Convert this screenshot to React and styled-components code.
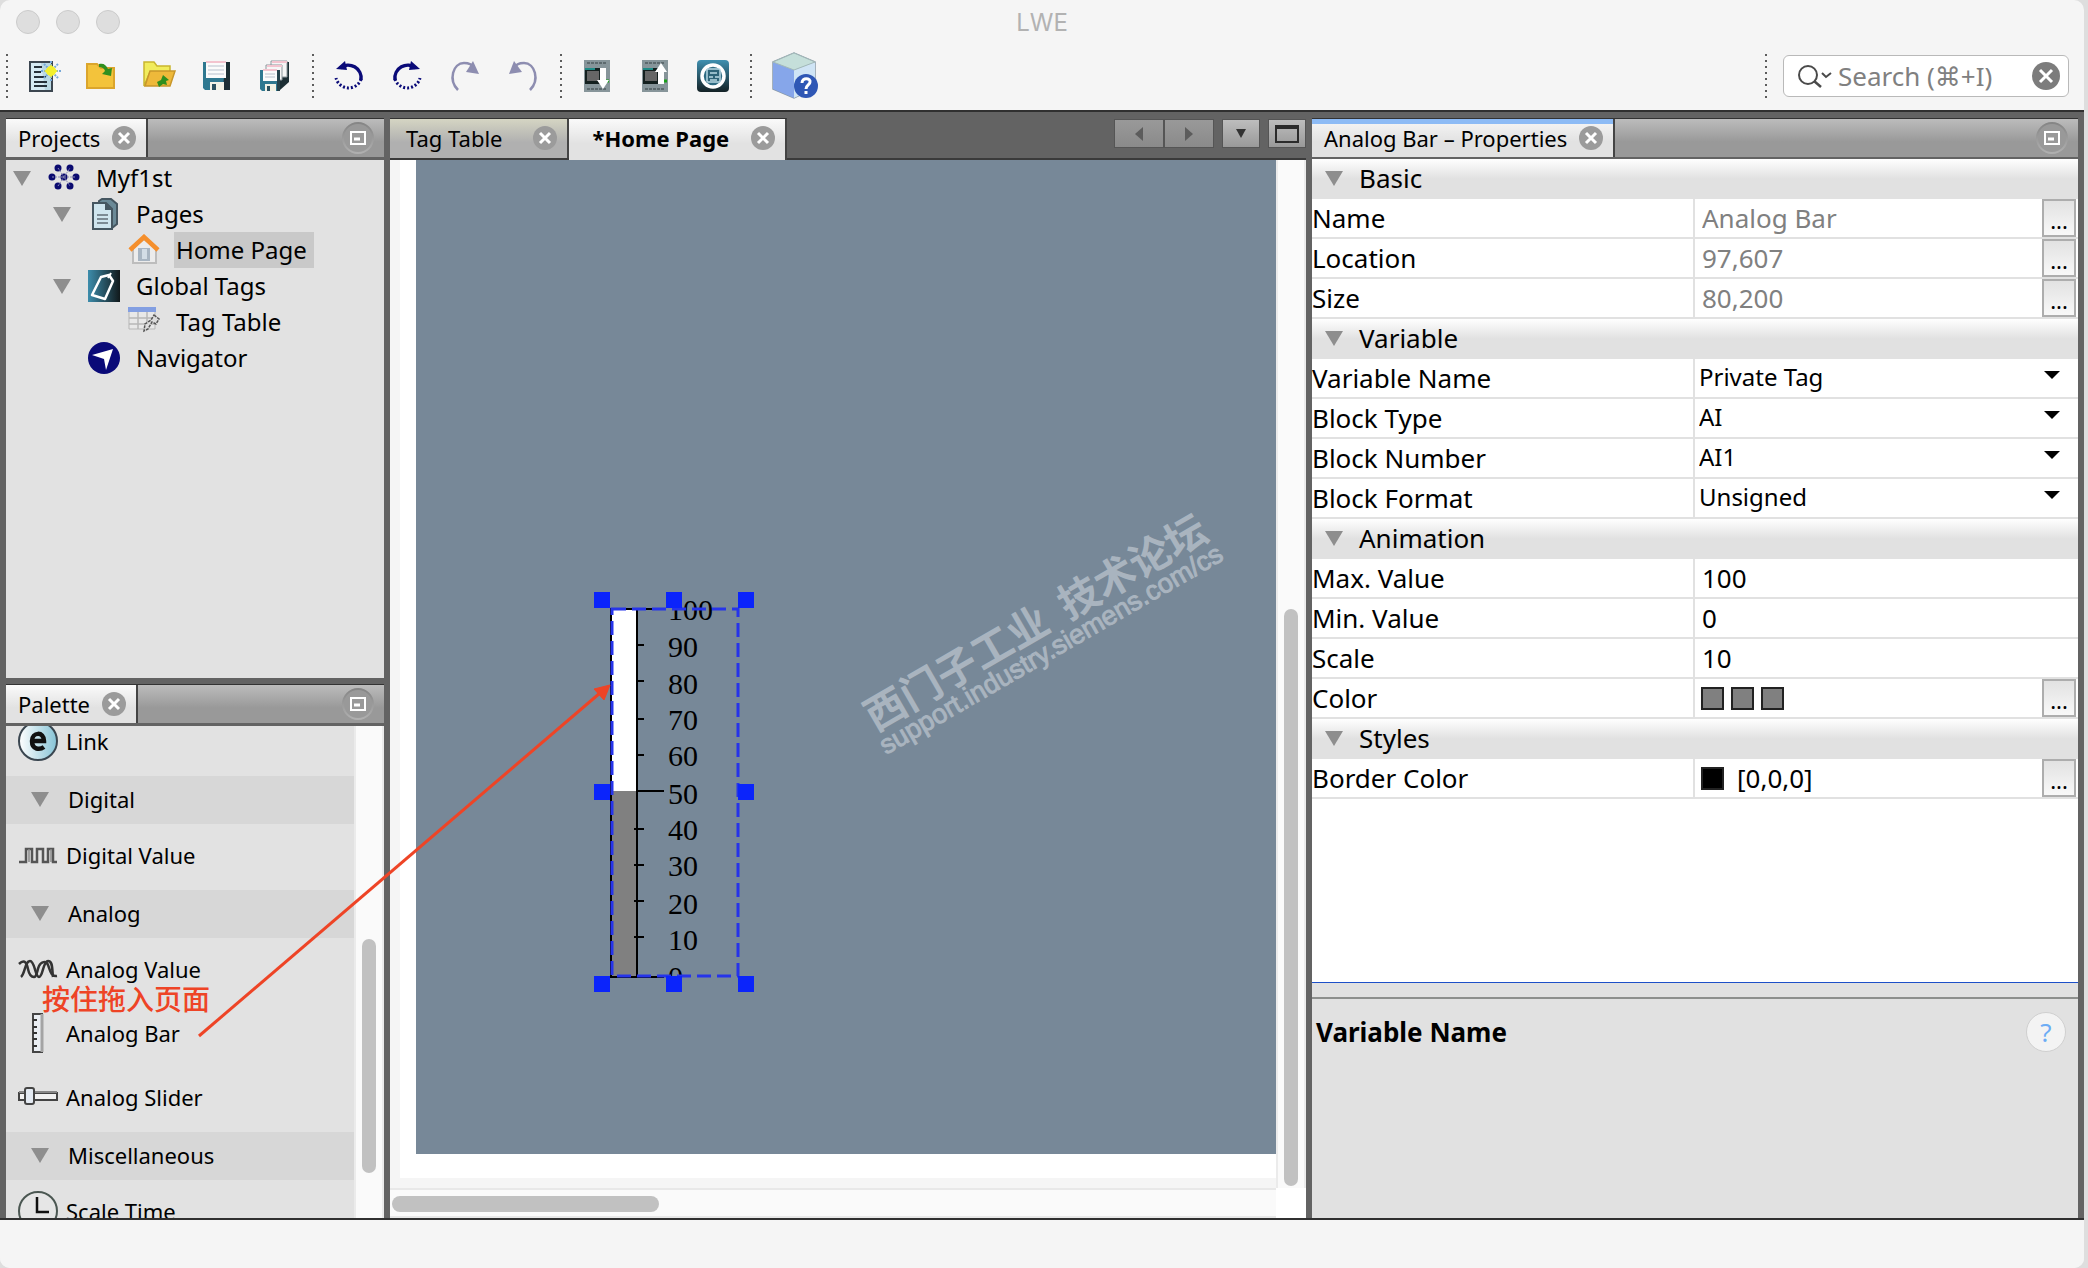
import React from 'react';
import styled, {createGlobalStyle} from 'styled-components';

const treeItems = [
    {level: 0, label: 'Myf1st', icon: 'project', open: true},
    {level: 1, label: 'Pages', icon: 'pages', open: true},
    {level: 2, label: 'Home Page', icon: 'home', selected: true},
    {level: 1, label: 'Global Tags', icon: 'tags', open: true},
    {level: 2, label: 'Tag Table', icon: 'table'},
    {level: 1, label: 'Navigator', icon: 'navigator'},
];

const paletteGroups = [
    {title: null, items: [{label: 'Link', icon: 'link'}]},
    {title: 'Digital', items: [{label: 'Digital Value', icon: 'digital'}]},
    {
        title: 'Analog',
        items: [
            {label: 'Analog Value', icon: 'analog'},
            {label: 'Analog Bar', icon: 'bar'},
            {label: 'Analog Slider', icon: 'slider'},
        ],
    },
    {title: 'Miscellaneous', items: [{label: 'Scale Time', icon: 'clock'}]},
];

const propertyGroups = [
    {
        title: 'Basic',
        rows: [
            {name: 'Name', value: 'Analog Bar', readOnly: true, more: true},
            {name: 'Location', value: '97,607', readOnly: true, more: true},
            {name: 'Size', value: '80,200', readOnly: true, more: true},
        ],
    },
    {
        title: 'Variable',
        rows: [
            {name: 'Variable Name', value: 'Private Tag', select: true},
            {name: 'Block Type', value: 'AI', select: true},
            {name: 'Block Number', value: 'AI1', select: true},
            {name: 'Block Format', value: 'Unsigned', select: true},
        ],
    },
    {
        title: 'Animation',
        rows: [
            {name: 'Max. Value', value: '100'},
            {name: 'Min. Value', value: '0'},
            {name: 'Scale', value: '10'},
            {name: 'Color', swatches: ['#808080', '#808080', '#808080'], more: true},
        ],
    },
    {
        title: 'Styles',
        rows: [{name: 'Border Color', swatches: ['#000'], value: '[0,0,0]', more: true}],
    },
];

const ticks = [
    {label: '100', y: 17, text: 28, long: true},
    {label: '90', y: 53, text: 65},
    {label: '80', y: 89, text: 102},
    {label: '70', y: 127, text: 138},
    {label: '60', y: 163, text: 174},
    {label: '50', y: 199, text: 212, long: true},
    {label: '40', y: 237, text: 248},
    {label: '30', y: 273, text: 284},
    {label: '20', y: 309, text: 322},
    {label: '10', y: 345, text: 358},
    {label: '0', y: 385, text: 395, long: true},
];

const Triangle = () => (
    <svg width="18" height="15" viewBox="0 0 18 15">
        <path d="M0 0h18L9 15z" fill="#8e8e8e" />
    </svg>
);

const CloseIcon = () => (
    <svg width="24" height="24" viewBox="0 0 24 24">
        <circle cx="12" cy="12" r="12" fill="#9b9b9b" />
        <path d="M7 7l10 10M17 7L7 17" stroke="#fff" strokeWidth="3" />
    </svg>
);

const MinimizeIcon = () => (
    <svg width="32" height="32" viewBox="0 0 32 32">
        <circle cx="16" cy="16" r="15" fill="#999" stroke="url(#ring)" strokeWidth="2" />
        <rect x="9" y="10" width="14" height="12" fill="none" stroke="#fff" strokeWidth="2" />
        <path d="M12 17h6" stroke="#fff" strokeWidth="3" />
        <defs>
            <linearGradient id="ring" x1="0" y1="0" x2="0" y2="1">
                <stop offset="0" stopColor="#858585" />
                <stop offset="1" stopColor="#b0b0b0" />
            </linearGradient>
        </defs>
    </svg>
);

const toolIcons = {
    newFile: (
        <>
            <path d="M3 2h22v29H3z" fill="#d5eaf3" stroke="#3c4650" strokeWidth="2" />
            <path d="M14 3h10v27h-6z" fill="#a9cbd9" opacity=".6" />
            <path d="M7 7h8M7 12h7M7 17h12M7 22h13M7 26h13" stroke="#26313a" strokeWidth="2" />
            <path d="M24 1v20M14 11h20M17 4l14 14M31 4L17 18" stroke="#77a9d8" strokeWidth="2" strokeDasharray="2 1" />
            <path d="M24 4l2 4 5 3-5 3-2 4-2-4-5-3 5-3z" fill="#f3f02c" />
            <circle cx="24" cy="11" r="5" fill="#f3f02c" />
        </>
    ),
    importProject: (
        <>
            <path d="M2 4h10l4 4h13v20H2z" fill="#f3c33b" stroke="#dba52c" strokeWidth="2" />
            <path d="M14 4c5-1 7 1 9 5l4-1-1 8-9-2 3-3c-1-3-3-4-6-4z" fill="#2f8f1f" />
        </>
    ),
    openProject: (
        <>
            <path d="M1 2h10l3 4h13v6H7L1 26z" fill="#f1ec5c" stroke="#c9b52e" strokeWidth="1.5" />
            <path d="M7 11h25l-5 15H2z" fill="#eeb93a" stroke="#c8972b" strokeWidth="1.5" />
            <path d="M20 15l6 5-3 1 1 4-4-1-4 3-2-5 4-2z" fill="#2f8f1f" />
        </>
    ),
    save: (
        <>
            <path d="M2 2h27v28H4l-2-2z" fill="#2f7890" />
            <path d="M24 2h5v28h-7z" fill="#1c2e34" />
            <path d="M5 1h20v17H5z" fill="#fbfbfb" />
            <path d="M5 2h20" stroke="#f3c4cf" strokeWidth="2" />
            <path d="M7 6h16M7 10h16M7 14h16" stroke="#cfd5dd" strokeWidth="1.5" />
            <path d="M9 22h14v8H9z" fill="#f2f2e6" />
            <path d="M11 24h4v6h-4z" fill="#2b5260" />
        </>
    ),
    saveAll: (
        <>
            <path d="M27 2h3v20l-9 8V12z" fill="#1c2e34" />
            <path d="M12 1h16v16H12z" fill="#f6f6f6" stroke="#8c979c" />
            <path d="M13 2h15" stroke="#f3c4cf" strokeWidth="2" />
            <path d="M7 5h16v15H7z" fill="#f6f6f6" stroke="#8c979c" />
            <path d="M8 6h15" stroke="#f3c4cf" strokeWidth="2" />
            <path d="M1 10h20v21H3l-2-2z" fill="#2f7890" />
            <path d="M18 10h3v21h-3z" fill="#26424c" />
            <path d="M4 9h14v12H4z" fill="#fbfbfb" />
            <path d="M4 10h14" stroke="#f3c4cf" strokeWidth="2" />
            <path d="M6 14h10M6 17h10" stroke="#cfd5dd" strokeWidth="1.5" />
            <path d="M6 24h11v7H6z" fill="#f2f2e6" />
            <path d="M8 26h3v5H8z" fill="#2b5260" />
        </>
    ),
    undo: (
        <>
            <path d="M7 8A13 13 0 0 1 28 20" fill="none" stroke="#0a0a78" strokeWidth="3.5" />
            <path d="M28 19A13 13 0 0 1 3 18" fill="none" stroke="#0a0a78" strokeWidth="3" strokeDasharray="2 2" />
            <path d="M3 9l9-8 2 9z" fill="#0a0a78" />
        </>
    ),
    redo: (
        <>
            <path d="M25 8A13 13 0 0 0 4 20" fill="none" stroke="#0a0a78" strokeWidth="3.5" />
            <path d="M4 19A13 13 0 0 0 29 18" fill="none" stroke="#0a0a78" strokeWidth="3" strokeDasharray="2 2" />
            <path d="M29 9l-9-8-2 9z" fill="#0a0a78" />
        </>
    ),
    redoPale: (
        <>
            <path d="M9 30C-1 20 4 3 15 3c5 0 8 1 10 5" fill="none" stroke="#8d8db0" strokeWidth="2.5" />
            <path d="M24 1l6 13-13-2z" fill="#8d8db0" />
        </>
    ),
    undoPale: (
        <>
            <path d="M23 30C33 20 28 3 17 3c-5 0-8 1-10 5" fill="none" stroke="#8d8db0" strokeWidth="2.5" />
            <path d="M7 1L2 14l13-2z" fill="#8d8db0" />
        </>
    ),
    download: (
        <>
            <path d="M3 0h26v32H3z" fill="#87959a" />
            <path d="M6 3h20M6 29h20" stroke="#5d6a6e" strokeWidth="2" strokeDasharray="3 1" />
            <path d="M4 8h15v16H4z" fill="#14201f" />
            <path d="M4 9h10" stroke="#1f8a86" strokeWidth="2" />
            <path d="M6 11h12v10H6z" fill="#666" />
            <path d="M25 21h3" stroke="#18a018" strokeWidth="3" />
            <path d="M22 29l6-9h-3V8h-6v12h-3z" fill="#fff" />
        </>
    ),
    upload: (
        <>
            <path d="M3 0h26v32H3z" fill="#87959a" />
            <path d="M6 3h20M6 29h20" stroke="#5d6a6e" strokeWidth="2" strokeDasharray="3 1" />
            <path d="M4 8h15v16H4z" fill="#14201f" />
            <path d="M4 9h10" stroke="#1f8a86" strokeWidth="2" />
            <path d="M6 11h12v10H6z" fill="#666" />
            <path d="M25 21h3" stroke="#18a018" strokeWidth="3" />
            <path d="M22 3l6 9h-3v12h-6V12h-3z" fill="#fff" />
        </>
    ),
    simulate: (
        <>
            <defs>
                <linearGradient id="sim" x1="0" y1="0" x2="0" y2="1">
                    <stop offset="0" stopColor="#3f90b0" />
                    <stop offset="1" stopColor="#142226" />
                </linearGradient>
            </defs>
            <rect width="32" height="32" rx="4" fill="url(#sim)" />
            <circle cx="16" cy="16" r="11" fill="#2e6b82" stroke="#fff" strokeWidth="3.5" />
            <rect x="10" y="9" width="13" height="13" rx="1" fill="#2e6478" stroke="#b9d9e4" strokeWidth="1.5" />
            <path d="M13 13h7M12 17h4M18 17h4M13 20h7" stroke="#b9d9e4" strokeWidth="1.5" />
        </>
    ),
};

const treeIcons = {
    project: (
        <g fill="#0a0a70">
            <circle cx="10" cy="6" r="3.500" /><circle cx="22" cy="6" r="3.500" />
            <circle cx="4" cy="15" r="3.500" /><circle cx="16" cy="15" r="3.500" /><circle cx="28" cy="15" r="3.500" />
            <circle cx="10" cy="24" r="3.500" /><circle cx="22" cy="24" r="3.500" />
            <path d="M10 6l6 9 6-9M10 24l6-9 6 9M4 15h24" stroke="#8c8cb4" strokeDasharray="2 1" fill="none" />
        </g>
    ),
    pages: (
        <>
            <path d="M11 3l3-2h9l6 5v20l-5 4H10z" fill="#6b8a97" stroke="#465761" strokeWidth="2" />
            <path d="M5 5h13l6 6v20H5z" fill="#cfe5ee" stroke="#465761" strokeWidth="2" />
            <path d="M17 4l7 8h-7z" fill="#465761" />
            <path d="M9 17h11M9 21h11M9 25h11" stroke="#7c8b94" strokeWidth="2" />
        </>
    ),
    home: (
        <>
            <path d="M5 14v15h23V14L16 5z" fill="#ececec" stroke="#bdbdbd" strokeWidth="2" />
            <path d="M10 14h12v13H10z" fill="#a8b5c2" />
            <path d="M14 15h5v10h-5z" fill="#d3dde6" />
            <path d="M2 16L16 3l14 13" fill="none" stroke="#f58f2c" strokeWidth="4.5" />
        </>
    ),
    tags: (
        <>
            <defs>
                <linearGradient id="tag" x1="0" y1="0" x2="1" y2="0">
                    <stop offset="0" stopColor="#3d8dac" />
                    <stop offset="1" stopColor="#11191b" />
                </linearGradient>
            </defs>
            <path d="M0 0h32v32H0z" fill="url(#tag)" />
            <path d="M13 7l8-2 4 6-8 18-13-4z" fill="none" stroke="#fff" strokeWidth="2.5" strokeLinejoin="round" />
            <path d="M20 8l3-5" stroke="#fff" strokeWidth="2" />
        </>
    ),
    table: (
        <>
            <path d="M1 2h26v21H1z" fill="#e8e8e8" stroke="#b7b7b7" />
            <path d="M0 1h28v5H0z" fill="#839fe2" />
            <path d="M10 6v17M19 6v17M1 12h26M1 18h26" stroke="#b7b7b7" strokeWidth="1.5" />
            <path d="M26 9l5 4-3 5-4-2-4 7-4 2 1-7 6-4z" fill="#ddd" stroke="#555" strokeWidth="1.5" strokeDasharray="3 1" />
        </>
    ),
    navigator: (
        <>
            <circle cx="16" cy="16" r="16" fill="#0a0a78" />
            <path d="M25 7l-7 21-2-11L4 13z" fill="#fff" />
        </>
    ),
};

const paletteIcons = {
    link: (
        <>
            <defs>
                <linearGradient id="ball">
                    <stop offset="0" stopColor="#fff" />
                    <stop offset="1" stopColor="#86c3d6" />
                </linearGradient>
            </defs>
            <circle cx="20" cy="20" r="19" fill="url(#ball)" stroke="#3a4650" strokeWidth="2" />
            <path d="M13 20h13c0-10-12-9-12 0 0 9 8 9 12 6" fill="none" stroke="#111" strokeWidth="4.5" />
        </>
    ),
    digital: (
        <g fill="none" stroke="#555" strokeWidth="2.5">
            <path d="M1 27h7V14h6v13h5V14h6v13h5V14h5v13h4" />
            <path d="M11 14v13M33 14v13" stroke="#8a8a8a" strokeWidth="1.5" />
        </g>
    ),
    analog: (
        <g fill="none" stroke="#333" strokeWidth="2.5">
            <path d="M1 15c6-6 8 0 9 5s3 8 6 8 3-7 5-11 7-6 9-1 3 12 9 11" />
            <path d="M3 28c4-3 4-16 9-16s5 16 9 16 4-16 9-16 4 8 5 16" />
        </g>
    ),
    bar: (
        <>
            <path d="M15 1h9v38h-9z" fill="#e9edf2" stroke="#444" strokeWidth="2" />
            <path d="M24 1v38" stroke="#a4a4a4" strokeWidth="3" />
            <path d="M15 7h4M15 14h4M15 20h4M15 26h4M15 33h4" stroke="#333" strokeWidth="2" />
        </>
    ),
    slider: (
        <>
            <path d="M1 16h38v7H1z" fill="#f2f2f2" stroke="#444" strokeWidth="2" />
            <path d="M1 15h38" stroke="#888" strokeWidth="2" />
            <rect x="7" y="11" width="9" height="16" rx="2" fill="#e4eaf2" stroke="#444" strokeWidth="2" />
        </>
    ),
    clock: (
        <>
            <circle cx="20" cy="20" r="19" fill="#e6e6e6" stroke="#4b5752" strokeWidth="2" />
            <path d="M19 6v15h12" fill="none" stroke="#111" strokeWidth="2.5" />
        </>
    ),
};

function ToolButton({name, label}) {
    return (
        <IconButton aria-label={label}>
            <svg width="32" height="32" viewBox="0 0 32 32" overflow="visible">{toolIcons[name]}</svg>
        </IconButton>
    );
}

function Toolbar() {
    return (
        <ToolbarRow>
            <Grip />
            <ToolGroup>
                <ToolButton name="newFile" label="New" />
                <ToolButton name="importProject" label="Import" />
                <ToolButton name="openProject" label="Open" />
                <ToolButton name="save" label="Save" />
                <ToolButton name="saveAll" label="Save all" />
            </ToolGroup>
            <Grip />
            <ToolGroup>
                <ToolButton name="undo" label="Rotate left" />
                <ToolButton name="redo" label="Rotate right" />
                <ToolButton name="redoPale" label="Redo" />
                <ToolButton name="undoPale" label="Undo" />
            </ToolGroup>
            <Grip />
            <ToolGroup>
                <ToolButton name="download" label="Download" />
                <ToolButton name="upload" label="Upload" />
                <ToolButton name="simulate" label="Simulate" />
            </ToolGroup>
            <Grip />
            <ToolGroup>
                <IconButton $large aria-label="Help">
                    <svg width="48" height="48" viewBox="0 0 48 48">
                        <path d="M3 10L24 1l21 9v26L24 46 3 37z" fill="#8fb2ea" stroke="#8a9aa8" strokeWidth="1.5" />
                        <path d="M3 10l21 8v28L3 37z" fill="#86a6ea" />
                        <path d="M24 18l21-8v26L24 46z" fill="#cfe4f5" />
                        <path d="M3 10L24 1l21 9-21 8z" fill="#c5dfda" stroke="#a3b9b8" />
                        <circle cx="36" cy="34" r="12" fill="#2f57b5" />
                        <path d="M32 31c0-6 9-5 8-1 0 3-4 3-4 7M36 39v3" fill="none" stroke="#fff" strokeWidth="3" />
                    </svg>
                </IconButton>
            </ToolGroup>
            <Spacer />
            <Grip />
            <SearchBox>
                <svg width="34" height="24" viewBox="0 0 34 24">
                    <circle cx="10" cy="11" r="9" fill="none" stroke="#4a4a4a" strokeWidth="2" />
                    <path d="M16 17l7 6" stroke="#4a4a4a" strokeWidth="2.5" />
                    <path d="M24 9l4 4 5-4" fill="none" stroke="#4a4a4a" strokeWidth="2" />
                </svg>
                <SearchInput aria-label="Search" placeholder="Search (⌘+I)" />
                <PlainButton aria-label="Clear search">
                    <svg width="28" height="28" viewBox="0 0 28 28">
                        <circle cx="14" cy="14" r="14" fill="#7c7c7c" />
                        <path d="M8 8l12 12M20 8L8 20" stroke="#fff" strokeWidth="3" />
                    </svg>
                </PlainButton>
            </SearchBox>
        </ToolbarRow>
    );
}

function PanelHeader({title, focused}) {
    return (
        <PanelHead>
            <PanelTab $focused={focused}>
                {title}
                <PlainButton aria-label={`Close ${title}`}><CloseIcon /></PlainButton>
            </PanelTab>
            <Spacer />
            <PlainButton aria-label={`Minimize ${title}`}><MinimizeIcon /></PlainButton>
        </PanelHead>
    );
}

function Projects() {
    return (
        <Panel>
            <PanelHeader title="Projects" />
            <Tree>
                {treeItems.map(item => (
                    <TreeRow key={item.label} $level={item.level}>
                        <TreeToggle>{item.open && <Triangle />}</TreeToggle>
                        <svg width="32" height="32" viewBox="0 0 32 32">{treeIcons[item.icon]}</svg>
                        <TreeLabel $selected={item.selected}>{item.label}</TreeLabel>
                    </TreeRow>
                ))}
            </Tree>
        </Panel>
    );
}

function Palette() {
    return (
        <Panel>
            <PanelHeader title="Palette" />
            <PaletteBody>
                <PaletteList>
                    {paletteGroups.map(group => (
                        <PaletteGroup key={group.title || 'links'}>
                            {group.title && <PaletteTitle><Triangle />{group.title}</PaletteTitle>}
                            {group.items.map(item => (
                                <PaletteItem key={item.label}>
                                    <svg width="40" height="40" viewBox="0 0 40 40">{paletteIcons[item.icon]}</svg>
                                    {item.label}
                                </PaletteItem>
                            ))}
                        </PaletteGroup>
                    ))}
                </PaletteList>
                <VerticalTrack $rows="213fr 234fr 45fr"><Thumb /></VerticalTrack>
            </PaletteBody>
        </Panel>
    );
}

// gauge with its selection frame and the eight drag handles
function AnalogBar() {
    return (
        <Gauge width="160" height="400" viewBox="0 0 160 400">
            <defs>
                <clipPath id="gaugeClip"><rect width="160" height="385" /></clipPath>
            </defs>
            <rect x="17" y="17" width="26" height="182" fill="#fff" />
            <rect x="17" y="199" width="26" height="186" fill="#808080" />
            <path d="M17 16v370M43 17v369" stroke="#000" strokeWidth="2" />
            {ticks.map(tick => (
                <path
                    key={tick.label}
                    d={tick.long
                        ? `M${tick.label === '50' ? 43 : 16} ${tick.y}H70`
                        : `M${tick.y > 199 ? 40 : 43} ${tick.y}H50`}
                    stroke="#000"
                    strokeWidth="2"
                />
            ))}
            <g clipPath="url(#gaugeClip)">
                {ticks.map(tick => (
                    <GaugeText key={tick.label} x="74" y={tick.text}>{tick.label}</GaugeText>
                ))}
            </g>
            <rect x="18" y="17" width="126" height="367" fill="none" stroke="#2634ea" strokeWidth="3" strokeDasharray="14 6" />
            {[0, 72, 144].map(x => [0, 192, 384].map(y => (
                (x !== 72 || y !== 192) && <rect key={`${x}-${y}`} x={x} y={y} width="16" height="16" fill="#0b24fb" />
            )))}
        </Gauge>
    );
}

function Editor() {
    return (
        <Panel>
            <EditorHead>
                <EditorTab>
                    Tag Table
                    <PlainButton aria-label="Close Tag Table"><CloseIcon /></PlainButton>
                </EditorTab>
                <EditorTab $active>
                    *Home Page
                    <PlainButton aria-label="Close Home Page"><CloseIcon /></PlainButton>
                </EditorTab>
                <Spacer />
                <EditorNav>
                    <NavPair>
                        <NavButton $wide aria-label="Previous tab">
                            <svg width="8" height="14"><path d="M8 0v14L0 7z" fill="#5c5c5c" /></svg>
                        </NavButton>
                        <NavButton $wide aria-label="Next tab">
                            <svg width="8" height="14"><path d="M0 0v14l8-7z" fill="#5c5c5c" /></svg>
                        </NavButton>
                    </NavPair>
                    <NavButton aria-label="Tab list">
                        <svg width="10" height="9"><path d="M0 0h10L5 9z" fill="#333" /></svg>
                    </NavButton>
                    <NavButton aria-label="Maximize">
                        <svg width="24" height="18">
                            <path d="M1 1h22v16H1z" fill="none" stroke="#2b2b2b" strokeWidth="2" />
                            <path d="M0 2h24" stroke="#2b2b2b" strokeWidth="4" />
                        </svg>
                    </NavButton>
                </EditorNav>
            </EditorHead>
            <EditorBody>
                <Desk>
                    <Sheet>
                        <Canvas>
                            <AnalogBar />
                            <Watermark>
                                <WatermarkTitle>西门子工业&nbsp;&nbsp;技术论坛</WatermarkTitle>
                                <WatermarkUrl>support.industry.siemens.com/cs</WatermarkUrl>
                            </Watermark>
                        </Canvas>
                    </Sheet>
                </Desk>
                <VerticalTrack $rows="449fr 577fr 2fr"><Thumb /></VerticalTrack>
                <HorizontalTrack><Thumb /></HorizontalTrack>
            </EditorBody>
        </Panel>
    );
}

function PropertyRow({row}) {
    const id = row.name.replace(/\W+/g, '-').toLowerCase();
    return (
        <PropRow>
            <PropName htmlFor={id}>{row.name}</PropName>
            <PropValue>
                {row.select && (
                    <>
                        <PropSelect id={id} defaultValue={row.value}>
                            <option>{row.value}</option>
                        </PropSelect>
                        <SelectArrow width="16" height="8"><path d="M0 0h16L8 8z" /></SelectArrow>
                    </>
                )}
                {row.swatches && (
                    <Swatches>
                        {row.swatches.map((color, i) => <Swatch key={i} $color={color} />)}
                    </Swatches>
                )}
                {!row.select && (
                    <PropInput id={id} defaultValue={row.value} readOnly={row.readOnly} />
                )}
                {row.more && <MoreButton aria-label={`Edit ${row.name}`}>...</MoreButton>}
            </PropValue>
        </PropRow>
    );
}

function Properties() {
    return (
        <Panel>
            <PanelHeader title="Analog Bar – Properties" focused />
            <PropSheet>
                {propertyGroups.map(group => (
                    <section key={group.title}>
                        <PropGroupTitle><Triangle />{group.title}</PropGroupTitle>
                        {group.rows.map(row => <PropertyRow key={row.name} row={row} />)}
                    </section>
                ))}
            </PropSheet>
            <Splitter />
            <Description>
                <DescriptionTitle>Variable Name</DescriptionTitle>
                <HelpButton aria-label="Property help">?</HelpButton>
            </Description>
        </Panel>
    );
}

function App() {
    return (
        <>
            <GlobalStyle />
            <Window>
                <TitleBar>
                    <Lights><Light /><Light /><Light /></Lights>
                    <WindowTitle>LWE</WindowTitle>
                </TitleBar>
                <Toolbar />
                <Workspace>
                    <Sidebar>
                        <Projects />
                        <Palette />
                    </Sidebar>
                    <Editor />
                    <Properties />
                </Workspace>
                <StatusBar />
                <Note>按住拖入页面</Note>
                <NoteArrow width="620" height="1050" viewBox="0 0 620 1050">
                    <path d="M199 1036L600 693" stroke="#ee4426" strokeWidth="3" />
                    <path d="M610 685l-6 15-10-11z" fill="#ee4426" stroke="#ee4426" />
                </NoteArrow>
            </Window>
        </>
    );
}

export default App;

const GlobalStyle = createGlobalStyle`
    * {
        box-sizing: border-box;
    }

    body {
        margin: 0;
        background: #dedede;
        color: #000;
        font-family: 'Noto Sans', 'DejaVu Sans', sans-serif;
        font-size: 22px;
    }

    button, input, select {
        font-family: inherit;
    }

    svg {
        display: block;
        flex: none;
    }
`;

const Window = styled.div`
    position: relative;
    display: flex;
    flex-direction: column;
    height: 100vh;
    margin-right: 4px;
    background: #f5f5f5;
    border-radius: 10px;
    overflow: hidden;
`;

const TitleBar = styled.header`
    flex: none;
    display: grid;
    grid-template-columns: 1fr auto 1fr;
    align-items: center;
    height: 44px;
    padding: 0 16px;
`;

const Lights = styled.div`
    display: flex;
    gap: 16px;
`;

const Light = styled.span`
    width: 24px;
    height: 24px;
    border: 1px solid #cbcbcb;
    border-radius: 50%;
    background: #dedede;
`;

const WindowTitle = styled.h1`
    margin: 0;
    font-family: Inter, sans-serif;
    font-size: 24px;
    font-weight: 400;
    color: #b2b2b2;
`;

const ToolbarRow = styled.div`
    flex: none;
    display: flex;
    align-items: center;
    height: 66px;
    padding: 0 15px 3px 6px;
`;

const Grip = styled.span`
    width: 2px;
    height: 44px;
    background: repeating-linear-gradient(#5c5c5c 0 2px, transparent 2px 6px);
`;

const ToolGroup = styled.div`
    display: flex;
    align-items: center;
    margin: 0 8px 0 6px;
`;

const PlainButton = styled.button`
    display: flex;
    align-items: center;
    justify-content: center;
    padding: 0;
    border: 0;
    background: none;
`;

const IconButton = styled(PlainButton)`
    width: ${({$large}) => ($large ? 72 : 58)}px;
    height: 48px;
`;

const Spacer = styled.div`
    flex: 1;
`;

const SearchBox = styled.div`
    display: flex;
    align-items: center;
    gap: 6px;
    width: 286px;
    height: 42px;
    margin-left: 16px;
    padding: 0 8px 0 14px;
    border: 1px solid #b9b9b9;
    border-radius: 6px;
    background: #fff;
`;

const SearchInput = styled.input`
    flex: 1;
    min-width: 0;
    height: 36px;
    padding: 0;
    border: 0;
    outline: 0;
    background: none;
    font-size: 26px;

    &::placeholder {
        color: #808080;
    }
`;

const Workspace = styled.main`
    flex: 1;
    min-height: 0;
    display: grid;
    grid-template-columns: 378fr 916fr 766fr;
    grid-template-rows: minmax(0, 1fr);
    gap: 6px;
    padding: 6px 6px 0;
    border: solid #303030;
    border-width: 2px 0;
    background: #636363;
`;

const Sidebar = styled.div`
    display: grid;
    grid-template-rows: minmax(0, 560fr) minmax(0, 534fr);
    gap: 6px;
    min-width: 0;
`;

const Panel = styled.section`
    display: flex;
    flex-direction: column;
    min-width: 0;
    min-height: 0;
`;

const PanelHead = styled.div`
    flex: none;
    display: flex;
    align-items: center;
    height: 42px;
    padding-right: 10px;
    border-top: 1px solid #333;
    border-bottom: 3px solid #636363;
    background: linear-gradient(#bcbcbc, #999 60%);
`;

const PanelTab = styled.div`
    display: flex;
    align-items: center;
    gap: 12px;
    height: 38px;
    padding: 0 10px 0 12px;
    border-right: 2px solid #444;
    background: ${({$focused}) => ($focused
        ? 'linear-gradient(#8dbbf5 0 5px, #f2f2f2 5px, #e2e2e2 60%)'
        : 'linear-gradient(#fafafa, #e2e2e2 60%)')};
    white-space: nowrap;
`;

const Tree = styled.div`
    flex: 1;
    min-height: 0;
    overflow: hidden;
    background: #e2e2e2;
`;

const TreeRow = styled.div`
    display: flex;
    align-items: center;
    height: 36px;
    padding-left: ${({$level}) => 7 + $level * 40}px;
    font-size: 24px;
`;

const TreeToggle = styled.span`
    width: 18px;
    margin-right: 17px;
`;

const TreeLabel = styled.span`
    height: 36px;
    margin-left: 14px;
    padding: 0 7px 0 2px;
    background: ${({$selected}) => ($selected ? '#c9c9c9' : 'none')};
    line-height: 36px;
`;

const PaletteBody = styled.div`
    flex: 1;
    min-height: 0;
    display: grid;
    grid-template-columns: 1fr 30px;
    grid-template-rows: minmax(0, 1fr);
`;

/* the list is scrolled down by a few rows, so its first group is cut off */
const PaletteList = styled.div`
    overflow: hidden;
    background: #e2e2e2;

    &::before {
        content: '';
        display: block;
        margin-top: -16px;
    }
`;

const PaletteGroup = styled.div`
    padding-bottom: 2px;
`;

const PaletteTitle = styled.div`
    display: flex;
    align-items: center;
    gap: 19px;
    height: 48px;
    padding: 0 0 2px 25px;
    background: #d7d7d7;
`;

const PaletteItem = styled.div`
    display: flex;
    align-items: center;
    gap: 8px;
    height: 64px;
    padding: 0 0 2px 12px;
`;

const VerticalTrack = styled.div`
    display: grid;
    grid-template-rows: ${({$rows}) => $rows};
    padding: 0 6px;
    border: solid #ebebeb;
    border-width: 0 2px;
    background: #fafafa;

    > * {
        grid-row: 2;
    }
`;

const HorizontalTrack = styled.div`
    display: grid;
    grid-template-columns: 2fr 267fr 617fr;
    padding: 6px 0 4px;
    border: solid #e8e8e8;
    border-width: 2px 0;
    background: #fafafa;

    > * {
        grid-column: 2;
    }
`;

const Thumb = styled.div`
    border-radius: 8px;
    background: #c1c1c1;
`;

const EditorHead = styled.div`
    flex: none;
    display: flex;
    height: 42px;
    border-bottom: 2px solid #3a3a3a;
`;

const EditorTab = styled.div`
    display: flex;
    align-items: center;
    gap: ${({$active}) => ($active ? 22 : 30)}px;
    height: ${({$active}) => ($active ? 42 : 40)}px;
    padding: 0 10px ${({$active}) => ($active ? '4px 24px' : '2px 16px')};
    border-top: 1px solid #333;
    border-right: 2px solid #444;
    background: ${({$active}) => ($active
        ? 'linear-gradient(#fafafa, #e2e2e2 60%)'
        : 'linear-gradient(#d5d5c3, #b0b0b0 60%)')};
    font-weight: ${({$active}) => ($active ? 700 : 400)};
    white-space: nowrap;
`;

const EditorNav = styled.div`
    display: flex;
    gap: 8px;
    padding: 1px 0;
`;

const NavPair = styled.div`
    display: flex;
`;

const NavButton = styled(PlainButton)`
    width: ${({$wide}) => ($wide ? 50 : 38)}px;
    height: 29px;
    border: 1px solid #555;
    background: ${({$wide}) => ($wide
        ? 'linear-gradient(#999, #8a8a8a)'
        : 'linear-gradient(#bdbdbd, #999)')};
`;

const EditorBody = styled.div`
    flex: 1;
    min-height: 0;
    display: grid;
    grid-template-columns: minmax(0, 1fr) 30px;
    grid-template-rows: minmax(0, 1fr) 30px;
    background: #fff;
`;

const Desk = styled.div`
    display: flex;
    padding: 0 0 10px 10px;
    background: #f5f5f5;
`;

const Sheet = styled.div`
    flex: 1;
    display: flex;
    padding: 0 0 24px 16px;
    background: #fff;
`;

const Canvas = styled.div`
    flex: 1;
    position: relative;
    overflow: hidden;
    background: #778898;
`;

const Gauge = styled.svg`
    position: absolute;
    left: 178px;
    top: 432px;
`;

const GaugeText = styled.text`
    font-family: 'Liberation Serif', serif;
    font-size: 30px;
`;

const Watermark = styled.div`
    position: absolute;
    left: 425px;
    top: 438px;
    width: 400px;
    color: #a9b4bf;
    text-align: center;
    white-space: nowrap;
    transform: rotate(-30deg);
`;

const WatermarkTitle = styled.div`
    font-family: 'Noto Sans CJK SC', sans-serif;
    font-size: 41px;
    font-weight: 700;
    line-height: 40px;
`;

const WatermarkUrl = styled.div`
    font-family: 'Liberation Sans', sans-serif;
    font-size: 27px;
    line-height: 28px;
    -webkit-text-stroke: 1px #a9b4bf;
`;

const PropSheet = styled.div`
    flex: 1;
    min-height: 0;
    margin-top: -1px;
    overflow: hidden;
    border-bottom: 1px solid #1d50c8;
    background: #fff;
    font-size: 26px;
`;

const PropGroupTitle = styled.h2`
    display: flex;
    align-items: center;
    gap: 16px;
    height: 40px;
    margin: 0;
    padding: 0 0 2px 13px;
    background: linear-gradient(#fff, #e1e1e1 50%);
    font-size: 26px;
    font-weight: 400;
`;

const PropRow = styled.div`
    display: grid;
    grid-template-columns: 1fr 1fr;
    height: 40px;
    border-bottom: 2px solid #e1e1e1;
`;

const PropName = styled.label`
    border-right: 2px solid #e1e1e1;
    line-height: 38px;
`;

const PropValue = styled.div`
    display: flex;
    align-items: center;
    min-width: 0;
    padding-right: 2px;
`;

const PropInput = styled.input`
    flex: 1;
    min-width: 0;
    height: 38px;
    padding: 0 0 0 7px;
    border: 0;
    outline: 0;
    background: none;
    color: ${({readOnly}) => (readOnly ? '#808080' : '#000')};
    font-size: 26px;
`;

const PropSelect = styled.select`
    flex: 1;
    min-width: 0;
    height: 38px;
    padding: 0 0 4px 4px;
    border: 0;
    outline: 0;
    appearance: none;
    background: none;
    color: #000;
    font-size: 24px;
`;

const SelectArrow = styled.svg`
    margin: 0 16px 6px 0;
    pointer-events: none;
`;

const Swatches = styled.span`
    display: flex;
    gap: 7px;
    padding: 0 6px;
`;

const Swatch = styled.span`
    width: 23px;
    height: 23px;
    border: 2px solid #222;
    background: ${({$color}) => $color};
`;

const MoreButton = styled.button`
    width: 34px;
    height: 38px;
    padding: 4px 0 0;
    border: 2px solid #adadad;
    background: linear-gradient(#e2e2e2, #f8f8f8);
    color: #000;
    font-size: 22px;
    line-height: 28px;
`;

const Splitter = styled.div`
    flex: none;
    height: 16px;
    border-bottom: 2px solid #8d8f8d;
    background: #e1e1e1;
`;

const Description = styled.div`
    flex: none;
    display: flex;
    align-items: flex-start;
    justify-content: space-between;
    height: 219px;
    padding: 13px 12px 0 4px;
    background: #e1e1e1;
`;

const DescriptionTitle = styled.h2`
    margin: 0;
    font-size: 26px;
    line-height: 40px;
`;

const HelpButton = styled.button`
    width: 40px;
    height: 40px;
    padding: 0;
    border: 1px solid #cfcfcf;
    border-radius: 50%;
    background: #f3f3f3;
    color: #6cacf5;
    font-size: 26px;
    line-height: 38px;
`;

const StatusBar = styled.footer`
    flex: none;
    height: 48px;
    background: #f5f5f5;
`;

const Note = styled.div`
    position: absolute;
    left: 42px;
    top: 979px;
    color: #ee4426;
    font-family: 'Noto Sans CJK SC', sans-serif;
    font-size: 28px;
    font-weight: 500;
    line-height: 38px;
`;

const NoteArrow = styled.svg`
    position: absolute;
    left: 0;
    top: 0;
    pointer-events: none;
`;
